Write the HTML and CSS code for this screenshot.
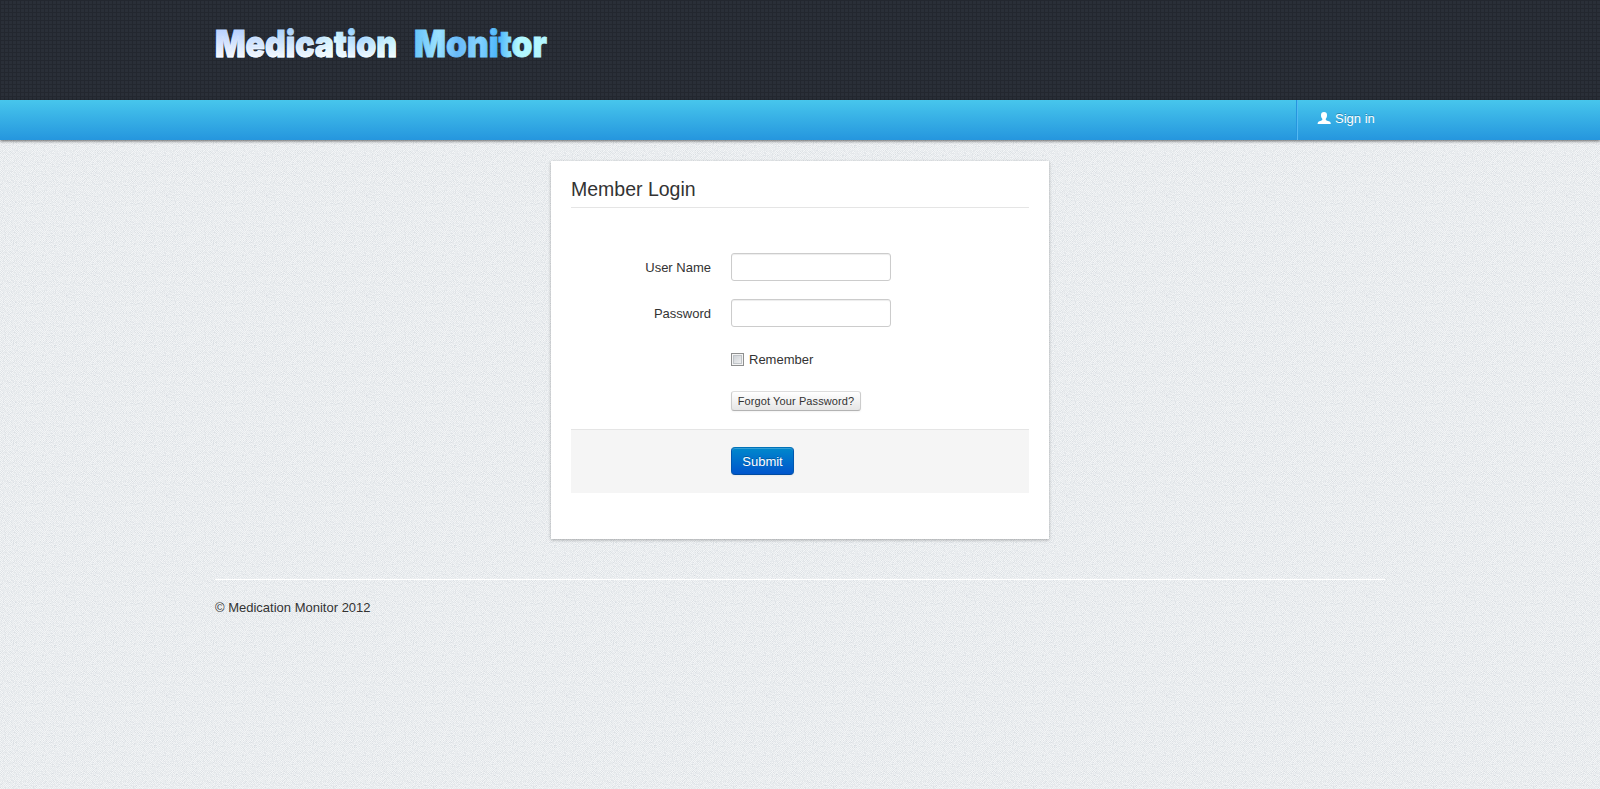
FILE: index.html
```html
<!DOCTYPE html>
<html lang="en">
<head>
<meta charset="utf-8">
<title>Medication Monitor</title>
<link rel="stylesheet" href="styles.css">
</head>
<body>
<header class="header">
  <div class="container">
    <svg class="logo" width="340" height="44" viewBox="0 0 340 44" role="img" aria-label="Medication Monitor">
      <defs>
        <linearGradient id="sky" gradientUnits="userSpaceOnUse" x1="0" y1="0" x2="333" y2="30">
          <stop offset="0" stop-color="#b9cfff"/>
          <stop offset=".3" stop-color="#a4d2fa"/>
          <stop offset=".36" stop-color="#c4f3ff"/>
          <stop offset=".43" stop-color="#85c5ff"/>
          <stop offset=".54" stop-color="#a9edff"/>
          <stop offset=".6" stop-color="#67c4fa"/>
          <stop offset=".67" stop-color="#9ce2ff"/>
          <stop offset=".73" stop-color="#68b9f9"/>
          <stop offset=".79" stop-color="#85d3ff"/>
          <stop offset=".85" stop-color="#4bb6fb"/>
          <stop offset=".91" stop-color="#b0f8ff"/>
          <stop offset="1" stop-color="#b4f6ff"/>
        </linearGradient>
        <linearGradient id="fall" gradientUnits="userSpaceOnUse" x1="0" y1="8" x2="0" y2="38">
          <stop offset="0" stop-color="#fff" stop-opacity="0"/>
          <stop offset="1" stop-color="#fff" stop-opacity=".9"/>
        </linearGradient>
      </defs>
      <g class="logo-text" fill="url(#sky)" stroke="url(#sky)">
        <text x="0" y="36" textLength="182" lengthAdjust="spacingAndGlyphs">Medication</text>
        <text x="199" y="36" textLength="133" lengthAdjust="spacingAndGlyphs">Monitor</text>
      </g>
      <g class="logo-text" fill="url(#fall)" stroke="url(#fall)" aria-hidden="true">
        <text x="0" y="36" textLength="182" lengthAdjust="spacingAndGlyphs">Medication</text>
      </g>
    </svg>
  </div>
</header>
<nav class="navbar">
  <div class="container navbar-inner">
    <a class="nav-link">
      <svg class="icon-user" width="14" height="14" viewBox="0 0 14 14"><path fill="#fff" d="M4 4C4 2 5 1 7 1s3 1 3 3c0 1.700-.4 2.900-1.200 3.700v1.300c1 1 3 .9 4.200 1.800.6.500.8 1.200.8 2.200H.6c0-1 .2-1.700.8-2.200C2.600 9.900 4.300 10 5.300 9V7.700C4.400 6.900 4 5.700 4 4z"/></svg>
      <span>Sign in</span>
    </a>
  </div>
</nav>
<main class="container">
  <form class="card">
    <h1 class="legend">Member Login</h1>
    <div class="control-group">
      <label class="control-label" for="user">User Name</label>
      <input class="field" id="user" type="text">
    </div>
    <div class="control-group">
      <label class="control-label" for="pass">Password</label>
      <input class="field" id="pass" type="password">
    </div>
    <label class="checkbox"><input class="check" type="checkbox"><span class="check-text">Remember</span></label>
    <button class="btn btn-small" type="button">Forgot Your Password?</button>
    <div class="form-actions">
      <button class="btn btn-primary" type="button">Submit</button>
    </div>
  </form>
  <hr class="rule">
  <footer class="footer">© Medication Monitor 2012</footer>
</main>
</body>
</html>
```
FILE: styles.css
```css
* { box-sizing: border-box; }
body {
  margin: 0;
  min-height: 789px;
  font: 13px/18px "Liberation Sans", Arial, sans-serif;
  color: #333;
  background-color: #eceff1;
  background-image: url("data:image/svg+xml,%3Csvg xmlns='http://www.w3.org/2000/svg' width='100' height='100'%3E%3Cfilter id='n' x='0' y='0' width='1' height='1'%3E%3CfeTurbulence type='fractalNoise' baseFrequency='.9' numOctaves='2' stitchTiles='stitch'/%3E%3CfeColorMatrix values='0 0 0 0 .5 0 0 0 0 .55 0 0 0 0 .6 1.1 0 0 0 -.49'/%3E%3C/filter%3E%3Crect width='100' height='100' filter='url(%23n)'/%3E%3C/svg%3E"), conic-gradient(#e8ebee 25%, #f4f6f7 0 50%, #e8ebee 0 75%, #f4f6f7 0);
  background-size: 100px 100px, 2px 2px;
}
.container { width: 1170px; margin: 0 auto; }
.header {
  height: 100px;
  padding-top: 21px;
  background-color: #2a2f38;
  background-image:
    linear-gradient(90deg, #23272f 1px, transparent 1px),
    linear-gradient(#23272f 1px, transparent 1px);
  background-size: 4px 4px;
}
.logo { display: block; overflow: visible; }
.logo-text { font: 900 36.5px Inter, sans-serif; stroke-width: .8px; }
.navbar {
  position: relative;
  height: 40px;
  background: linear-gradient(#47c6ec, #2596de);
  box-shadow: 0 1px 3px rgba(0, 0, 0, .6);
}
.navbar-inner { display: flex; justify-content: flex-end; }
.nav-link {
  display: flex;
  gap: 4px;
  width: 88px;
  height: 40px;
  padding: 10px 0 0 19px;
  border-left: 1px solid #54b9f2;
  box-shadow: -1px 0 0 #2596de;
  color: #fff;
  text-shadow: 0 -1px 0 rgba(0, 0, 0, .25);
  white-space: nowrap;
}
.icon-user { flex: none; margin-top: 1px; }
.card {
  width: 498px;
  height: 378px;
  margin: 21px auto 0;
  padding: 10px 20px 0;
  background: #fff;
  box-shadow: 0 1px 3px rgba(0, 0, 0, .3);
}
.legend {
  height: 37px;
  margin: 0 0 45px;
  font-size: 19.5px;
  font-weight: 400;
  line-height: 36px;
  border-bottom: 1px solid #e5e5e5;
}
.control-group { display: flex; gap: 20px; margin-bottom: 18px; }
.control-label { width: 140px; padding-top: 6px; text-align: right; }
.field {
  width: 160px;
  height: 28px;
  padding: 4px;
  border: 1px solid #ccc;
  border-radius: 3px;
  background: #fff;
  box-shadow: inset 0 1px 1px rgba(0, 0, 0, .075);
}
.checkbox { display: flex; align-items: center; gap: 5px; height: 18px; margin: 23px 0 23px 160px; }
.check-text { padding-top: 2px; }
.check {
  appearance: none;
  width: 13px;
  height: 13px;
  margin: 0;
  border: 1px solid #8e8f8f;
  background: linear-gradient(135deg, #c6cbd0, #f6f6f6) padding-box;
  box-shadow: inset 0 0 0 1px #f4f4f4, inset 0 0 0 2px #c0c4c8;
}
.btn {
  display: block;
  font: 13px/18px "Liberation Sans", Arial, sans-serif;
  color: #333;
  border: 1px solid #ccc;
  border-color: #ddd #ccc #b3b3b3;
  border-radius: 4px;
  background: linear-gradient(#fff, #e6e6e6);
  box-shadow: inset 0 1px 0 rgba(255, 255, 255, .2), 0 1px 2px rgba(0, 0, 0, .05);
}
.btn-small { width: 130px; height: 20px; margin-left: 160px; padding: 0; font-size: 11px; letter-spacing: .1px; border-radius: 3px; white-space: nowrap; }
.form-actions {
  height: 64px;
  margin-top: 18px;
  padding: 17px 0 0 160px;
  background: #f5f5f5;
  border-top: 1px solid #e5e5e5;
}
.btn-primary {
  width: 63px;
  height: 28px;
  padding: 2px 0 0;
  color: #fff;
  text-shadow: 0 -1px 0 rgba(0, 0, 0, .25);
  border-color: #0072b8 #0058b0 #004ba0;
  background: linear-gradient(#08c, #05c);
}
.rule { height: 1px; margin: 40px 0 19px; border: 0; background: #fff; }
.footer { line-height: 18px; }
```
